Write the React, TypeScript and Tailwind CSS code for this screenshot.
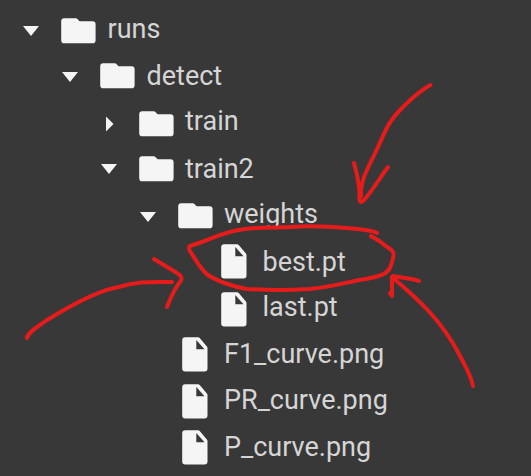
type Entry = {
  name: string;
  kind: 'open' | 'closed' | 'file';
  indent: string;
  height: string;
  caret: string;
  icon: string;
};

const entries: Entry[] = [
  { name: 'runs', kind: 'open', indent: 'pl-[23px]', height: 'h-[47px]', caret: 'mt-5', icon: 'mt-3' },
  { name: 'detect', kind: 'open', indent: 'pl-[62px]', height: 'h-[45px]', caret: 'mt-[18.5px]', icon: 'mt-[10px]' },
  { name: 'train', kind: 'closed', indent: 'pl-[100.5px]', height: 'h-[48px]', caret: 'mt-[17.5px]', icon: 'mt-[13px]' },
  { name: 'train2', kind: 'open', indent: 'pl-[100.5px]', height: 'h-[45px]', caret: 'mt-[18px]', icon: 'mt-[10px]' },
  { name: 'weights', kind: 'open', indent: 'pl-[139.5px]', height: 'h-[48px]', caret: 'mt-[20.5px]', icon: 'mt-3' },
  { name: 'best.pt', kind: 'file', indent: 'pl-[178px]', height: 'h-[45px]', caret: '', icon: 'mt-[5px]' },
  { name: 'last.pt', kind: 'file', indent: 'pl-[178px]', height: 'h-[47px]', caret: '', icon: 'mt-2' },
  { name: 'F1_curve.png', kind: 'file', indent: 'pl-[139.5px]', height: 'h-[46px]', caret: '', icon: 'mt-[6px]' },
  { name: 'PR_curve.png', kind: 'file', indent: 'pl-[139.5px]', height: 'h-[47px]', caret: '', icon: 'mt-[7px]' },
  { name: 'P_curve.png', kind: 'file', indent: 'pl-[139.5px]', height: 'h-[46px]', caret: '', icon: 'mt-[6px]' },
];

function Caret({ kind }: { kind: Entry['kind'] }) {
  if (kind === 'file') return null;
  return kind === 'open' ? (
    <svg width="16" height="10" viewBox="0 0 16 10" fill="#f5f5f5">
      <path d="M0 0H16L8 10Z" />
    </svg>
  ) : (
    <svg className="ml-[5.5px]" width="8" height="16" viewBox="0 0 8 16" fill="#f5f5f5">
      <path d="M0 .5L7.5 8L0 15.5Z" />
    </svg>
  );
}

function FolderIcon() {
  return (
    <svg width="35" height="26" viewBox="0 0 35 26" fill="#f5f5f5">
      <path d="M3.2 .3H14.8Q15.7 .3 16.4 1L18.6 3.2H31.6Q34.6 3.2 34.6 6.2V22.2Q34.6 25.3 31.6 25.3H3.2Q.2 25.3 .2 22.2V3.3Q.2 .3 3.2 .3Z" />
    </svg>
  );
}

function FileIcon() {
  return (
    <svg width="26" height="35" viewBox="0 0 26 35" fill="#f5f5f5" fillRule="evenodd">
      <path d="M3.2 .3H16Q17 .3 17.7 1L24.9 9.6Q25.5 10.3 25.5 11.2V31.4Q25.5 34.4 22.5 34.4H3.2Q.2 34.4 .2 31.4V3.3Q.2 .3 3.2 .3ZM14.3 3V12.2H22.5Z" />
    </svg>
  );
}

function TreeRow({ name, kind, indent, height, caret, icon }: Entry) {
  return (
    <div className={`flex items-start ${indent} ${height}`}>
      <div className={`w-[38px] shrink-0 ${caret}`}>
        <Caret kind={kind} />
      </div>
      <div className={`flex w-[46.5px] shrink-0 ${icon} ${kind === 'file' ? 'pl-[4.5px]' : ''}`}>
        {kind === 'file' ? <FileIcon /> : <FolderIcon />}
      </div>
      <span className="whitespace-nowrap text-[27px] leading-[46px] text-[#d5d5d5]">{name}</span>
    </div>
  );
}

function Annotations() {
  return (
    <svg
      className="pointer-events-none absolute inset-0"
      width="531"
      height="476"
      viewBox="0 0 531 476"
      fill="none"
      stroke="#e81b1b"
      strokeWidth="4"
      strokeLinecap="round"
      strokeLinejoin="round"
    >
      <path d="M430.5 85C421 90 411 99 403 107C389 121 387 127 378 147C370 165 360 179 361 196" />
      <path d="M354 163C358 177 360 186 359.500 198C359.500 203 362 203 364 200C373 190 379 179 388 167" />
      <path d="M377 233C372 230 359 229 346 228C322 226 304 226 291 227C273 228 260 227 245 229C221 232 213 239 193 245Q187 246 190 251C196 260 201 270 208 275C217 281 234 287 247 289C264 290 292 290 310 289C332 287 351 281 366 279C381 276 387 274 390 268C392 262 395 255 393 252C391 248 386 247 382 243C378 240 374 238 371 236" />
      <path d="M27 338C28 332 39 326 47 320C65 309 97 290 119 287C137 281 152 282 172 282" />
      <path d="M154 259L177 273Q184 277 180 282C174 289 171 297 167 307" />
      <path d="M473 386C471 375 465 366 459 354C442 321 418 299 393 278" />
      <path d="M419 281C410 278 401 278 393 276L392 277V296L390 293" />
    </svg>
  );
}

export default function App() {
  return (
    <main
      className="relative h-[476px] w-[531px] overflow-hidden bg-[#383838] pt-[6px]"
      style={{ fontFamily: 'Roboto, sans-serif' }}
    >
      {entries.map((entry) => (
        <TreeRow key={entry.name} {...entry} />
      ))}
      <Annotations />
    </main>
  );
}
